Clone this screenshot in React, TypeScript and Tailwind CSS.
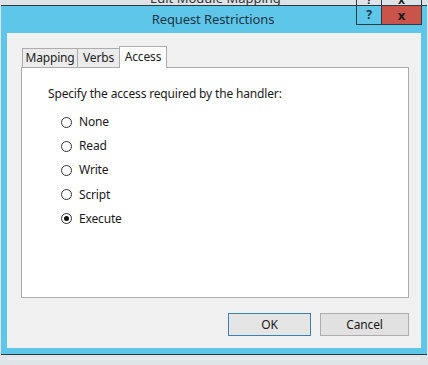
const options = ['None', 'Read', 'Write', 'Script', 'Execute']

const ui = { fontFamily: '"Noto Sans", "Open Sans", sans-serif' }

function Radio({ label, checked }: { label: string; checked?: boolean }) {
  return (
    <div className="flex h-[24.2px] items-center">
      <span className="ml-[13px] flex h-[11px] w-[11px] items-center justify-center rounded-full border border-[#333] bg-white">
        {checked && <span className="h-[5px] w-[5px] rounded-full bg-[#111]" />}
      </span>
      <span className="ml-[7px] text-[12px] tracking-[-0.16px] text-[#1a1a1a]">{label}</span>
    </div>
  )
}

export default function App() {
  return (
    <div className="relative h-[365px] w-[428px] overflow-hidden bg-[#dfe4e7]" style={ui}>
      {/* window behind the dialog */}
      <div className="h-[5px] overflow-hidden bg-[#dde3e6]">
        <div className="-mt-[8px] ml-[150px] text-[13px] leading-[12px] text-[#333]">Edit Module Mapping</div>
      </div>

      <div className="ml-px w-[426px] border-t border-[#2c3a44] bg-[#5ec6e8]">
        <div className="flex h-[27px] items-center justify-center pr-[2px] text-[13px] tracking-[-0.1px] text-[#1c3446]">
          Request Restrictions
        </div>
        <div className="mx-[6px] h-[315px] bg-[#f0f0f0] pt-[13px]">
          {/* tabs */}
          <div className="flex h-[21px] items-end pl-[15px] text-[12px] tracking-[-0.16px] text-[#222]">
            <div className="-mr-px flex h-[19px] w-[56px] items-center justify-center border border-b-0 border-[#acacac] bg-[#ebebeb]">
              Mapping
            </div>
            <div className="-mr-px flex h-[19px] w-[43px] items-center justify-center border border-b-0 border-[#acacac] bg-[#ebebeb]">
              Verbs
            </div>
            <div className="relative z-10 -mb-px flex h-[22px] w-[48px] items-start justify-center border border-b-0 border-[#acacac] bg-white pt-[1px]">
              Access
            </div>
          </div>
          <div className="ml-[14px] h-[231px] w-[388px] border border-[#acacac] bg-white pt-[17px] pl-[26px]">
            <div className="text-[12px] tracking-[-0.16px] text-[#1a1a1a]">Specify the access required by the handler:</div>
            <div className="mt-[7px]">
              {options.map((o) => (
                <Radio key={o} label={o} checked={o === 'Execute'} />
              ))}
            </div>
          </div>
          <div className="mt-[15px] flex justify-end gap-[9px] pr-[12px] text-[12px] tracking-[-0.16px] text-[#1a1a1a]">
            <button className="h-[23px] w-[83px] border border-[#3c7fb1] bg-[#e5e5e5]">OK</button>
            <button className="h-[23px] w-[89px] border border-[#adadad] bg-[#e1e1e1]">Cancel</button>
          </div>
        </div>
        <div className="h-[6px]" />
      </div>
      <div className="ml-px h-px w-[426px] bg-[#2c3a44]" />
      <div className="ml-[8px] mt-[2px] h-[3px] w-[412px] bg-[#e9ecee]" />

      {/* caption buttons */}
      <div className="absolute top-0 left-[356px] flex h-[25px] border border-t-0 border-[#2c3a44]">
        <div className="flex w-[25px] flex-col items-center border-r border-[#2c3a44]">
          <div className="h-[5px] w-full overflow-hidden bg-[#dde3e6] text-center">
            <div className="-mt-[5px] text-[11px] leading-[9px] font-bold text-[#222]">?</div>
          </div>
          <div className="flex w-full flex-1 items-center justify-center border-t border-[#2c3a44] bg-[#5ec6e8] text-[12px] leading-none font-bold text-[#1c3446]">
            ?
          </div>
        </div>
        <div className="flex w-[39px] flex-col">
          <div className="h-[5px] w-full overflow-hidden bg-[#dde3e6] text-center">
            <div className="-mt-[5px] text-[12px] leading-[9px] font-bold text-[#222]">x</div>
          </div>
          <div className="flex w-full flex-1 items-center justify-center border-t border-[#2c3a44] bg-[#c9544a] text-[13px] leading-none font-bold text-[#1a1a1a]">
            x
          </div>
        </div>
      </div>
    </div>
  )
}
